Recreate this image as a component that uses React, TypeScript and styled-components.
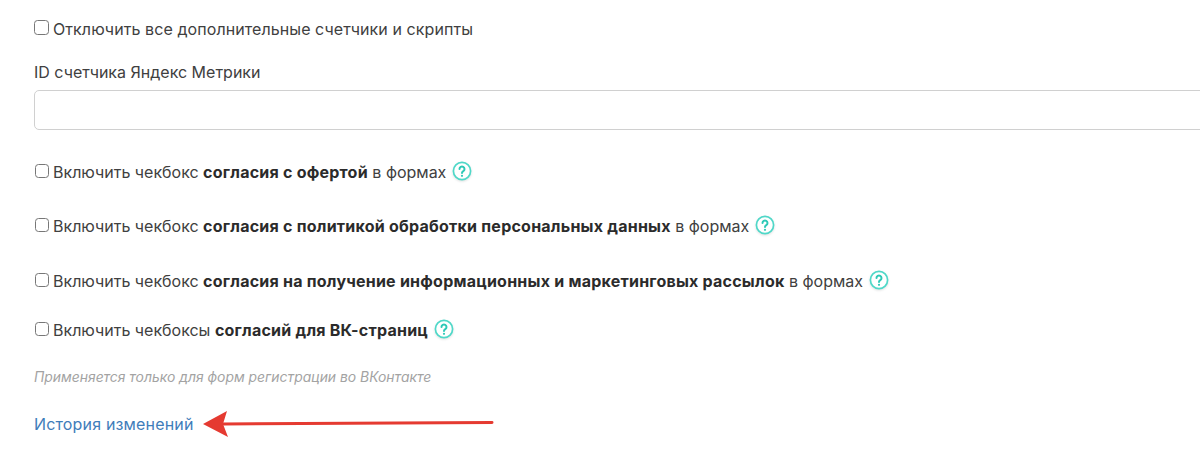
import styled, { createGlobalStyle } from 'styled-components';

const GlobalStyle = createGlobalStyle`
  html, body {
    margin: 0;
    padding: 0;
    background: #fff;
  }
  body {
    font-family: Inter, "Noto Sans", sans-serif;
    overflow: hidden;
  }
`;

const consents = [
  { before: 'Включить чекбокс ', bold: 'согласия с офертой', after: ' в формах', height: 54 },
  { before: 'Включить чекбокс ', bold: 'согласия с политикой обработки персональных данных', after: ' в формах', height: 54 },
  { before: 'Включить чекбокс ', bold: 'согласия на получение информационных и маркетинговых рассылок', after: ' в формах', height: 56 },
  { before: 'Включить чекбоксы ', bold: 'согласий для ВК-страниц', after: '', height: 42 },
];

const Help = () => (
  <HelpIcon viewBox="0 0 20 20" aria-hidden="true">
    <circle cx="10" cy="10" r="8.6" fill="#fff" stroke="#4fd8c8" strokeWidth="1.7" />
    <path
      d="M7.5 8a2.5 2.5 0 1 1 3.8 2.1c-.9.6-1.3 1-1.3 1.9"
      fill="none"
      stroke="#2ec9b7"
      strokeWidth="2"
      strokeLinecap="round"
    />
    <circle cx="10" cy="14.8" r="1.1" fill="#2ec9b7" />
  </HelpIcon>
);

const App = () => {
  return (
    <>
      <GlobalStyle />
      <Page>
        <CheckRow $height={34}>
          <CheckBox type="checkbox" />
          <RowText>Отключить все дополнительные счетчики и скрипты</RowText>
        </CheckRow>
        <FieldLabel>ID счетчика Яндекс Метрики</FieldLabel>
        <TextInput type="text" />
        <Consents>
          {consents.map((item) => (
            <CheckRow key={item.bold} $height={item.height}>
              <CheckBox type="checkbox" $small />
              <span>
                {item.before}
                <b>{item.bold}</b>
                {item.after}
              </span>
              <Help />
            </CheckRow>
          ))}
        </Consents>
        <Hint>Применяется только для форм регистрации во ВКонтакте</Hint>
        <HistoryLink href="#">История изменений</HistoryLink>
        <Arrow viewBox="0 0 296 30" aria-hidden="true">
          <path d="M291 12.5 L22 14" stroke="#e53a31" strokeWidth="3" strokeLinecap="round" fill="none" />
          <path d="M2 14 L26 1 L22 14 L27 27 Z" fill="#e53a31" />
        </Arrow>
      </Page>
    </>
  );
};

export default App;

const Page = styled.div`
  position: relative;
  width: 1200px;
  height: 456px;
  overflow: hidden;
  box-sizing: border-box;
  padding: 12px 0 0 34px;
  color: #404040;
  font-size: 16px;
`;

const CheckRow = styled.label<{ $height: number }>`
  display: flex;
  align-items: center;
  height: ${(p) => p.$height}px;
  white-space: nowrap;
  b {
    font-weight: 700;
    letter-spacing: 0.23px;
    color: #2b2b2b;
  }
`;

const RowText = styled.span`
  letter-spacing: 0.08px;
`;

const CheckBox = styled.input<{ $small?: boolean }>`
  appearance: none;
  flex: none;
  box-sizing: border-box;
  width: ${(p) => (p.$small ? 14 : 15)}px;
  height: ${(p) => (p.$small ? 14 : 15)}px;
  margin: 0 4px 3px ${(p) => (p.$small ? 1 : 0)}px;
  background: #fff;
  border: 1.5px solid #777;
  border-radius: 3.5px;
`;

const FieldLabel = styled.div`
  margin-top: 8px;
  height: 36px;
  line-height: 36px;
  white-space: nowrap;
`;

const TextInput = styled.input`
  display: block;
  box-sizing: border-box;
  width: 1240px;
  height: 40px;
  padding: 0 12px;
  background: #fff;
  border: 1px solid #d0d0d0;
  border-radius: 5px;
`;

const Consents = styled.div`
  display: flex;
  flex-direction: column;
  margin-top: 15px;
`;

const HelpIcon = styled.svg`
  flex: none;
  width: 20px;
  height: 20px;
  margin: 0 0 2px 6px;
  filter: drop-shadow(0 1px 1px rgba(0, 0, 0, 0.12));
`;

const Hint = styled.div`
  margin-top: 14px;
  height: 24px;
  line-height: 24px;
  font-size: 13.9px;
  font-style: italic;
  color: #a3a3a3;
  white-space: nowrap;
`;

const HistoryLink = styled.a`
  display: inline-block;
  margin-top: 23px;
  line-height: 24px;
  letter-spacing: 0.16px;
  color: #3f7dba;
  text-decoration: none;
  white-space: nowrap;
`;

const Arrow = styled.svg`
  position: absolute;
  left: 201px;
  top: 410px;
  width: 296px;
  height: 30px;
`;
